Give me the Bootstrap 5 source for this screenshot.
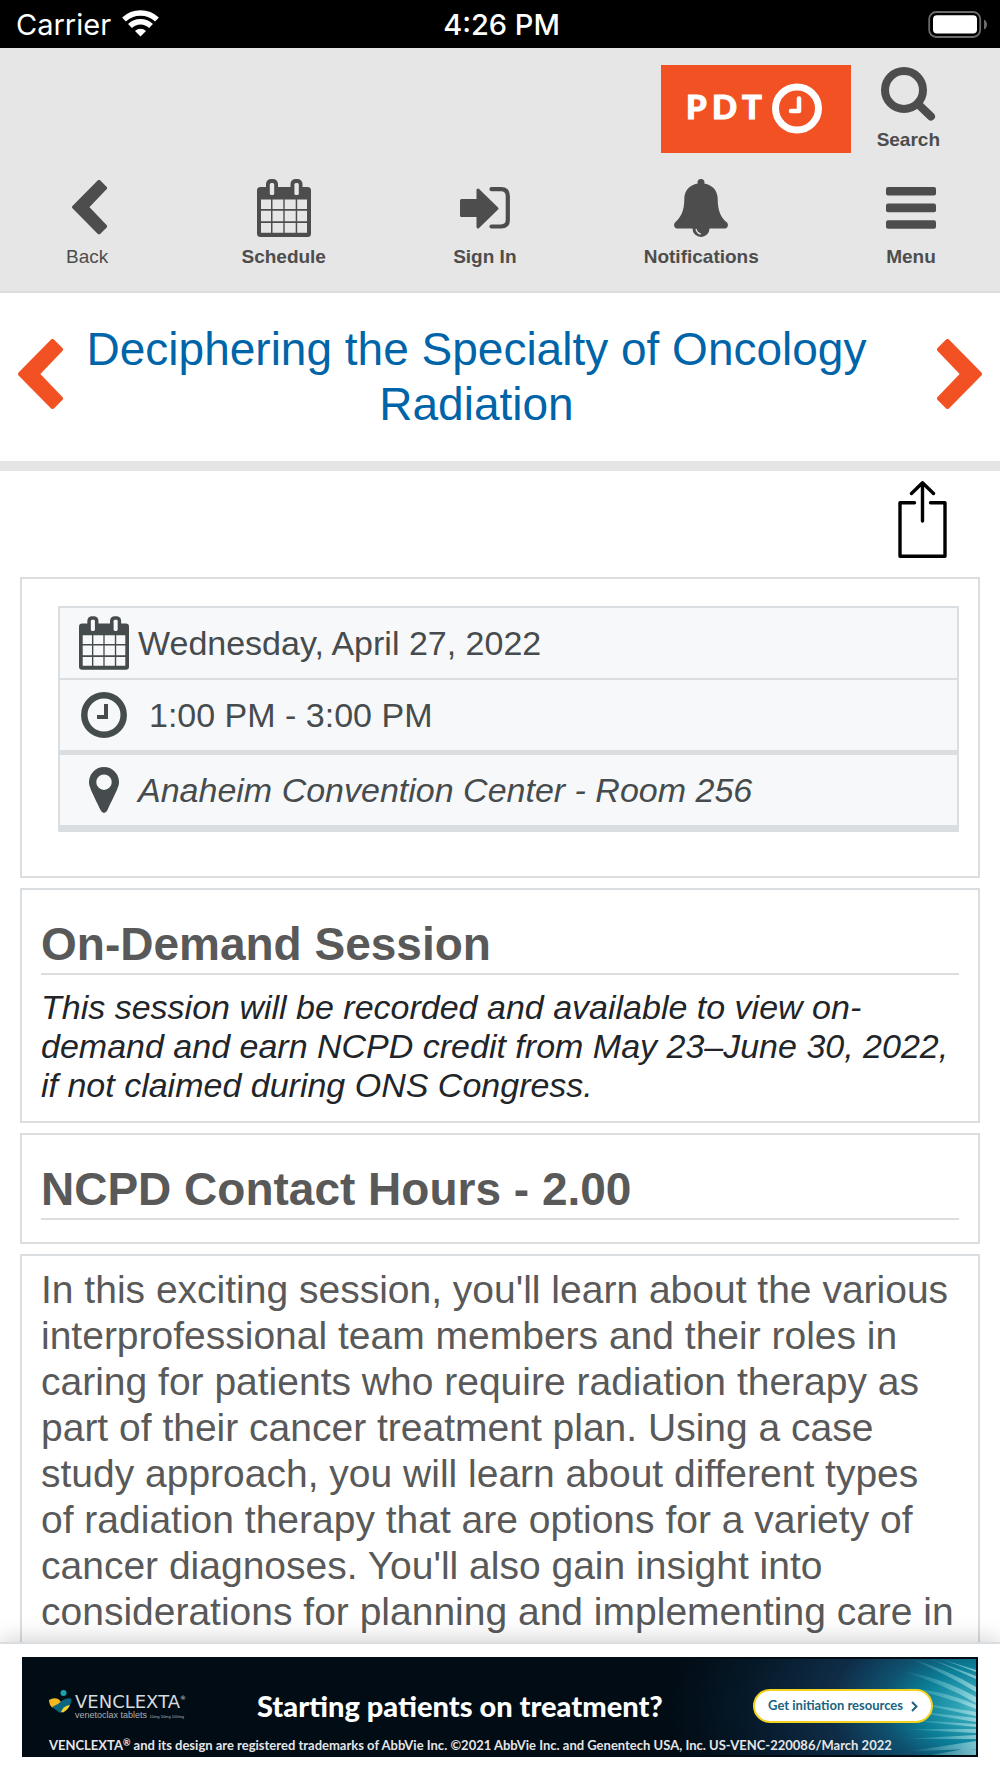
<!DOCTYPE html>
<html lang="en">
<head>
<meta charset="utf-8">
<meta name="viewport" content="width=device-width, initial-scale=1">
<title>Deciphering the Specialty of Oncology Radiation</title>
<link rel="stylesheet" href="https://cdn.jsdelivr.net/npm/bootstrap@5.3.0/dist/css/bootstrap.min.css">
<style>
  :root { --line: #dadee1; --chrome: #e6e6e6; --ink: #4d4d4d; --slate: #464b4d; --brand: #f15123; --title: #0064a8; }
  body { font-family: "Liberation Sans", Arial, sans-serif; color: #595959; background: #fff; }
  svg { display: block; flex: none; }
  .status { flex: none; height: 48px; padding: 0 13px 0 16px; background: #000; color: #fff; font: 29px/50px Inter, sans-serif; }
  .status > * { flex: 1 1 0; }
  .status .wifi { margin: 0 0 4px 11px; }
  .status .clock { font-weight: 500; }
  .topbar { flex: none; background: var(--chrome); border-bottom: 2px solid var(--line); --paper: var(--chrome); padding: 17px 0 22px; }
  .topbar a { color: var(--ink); text-decoration: none; font-weight: 700; font-size: 19px; line-height: 24px; }
  .brandrow { padding-right: 60px; gap: 26px; }
  .brandrow .find { gap: 6px; padding-top: 1px; }
  .tabrow { padding: 26px 64px 0 66px; }
  .tabrow a { gap: 8px; }
  .tabrow a.plain { font-weight: 400; padding-right: 6px; }
  .tabrow a.plain svg { margin-left: 6px; }
  .talk { padding: 29px 18px; border-bottom: 10px solid #e5e5e5; }
  .talk h1 { color: var(--title); font-size: 46px; line-height: 55px; font-weight: 400; padding-right: 47px; }
  .talk a { color: var(--brand); padding-bottom: 6px; }
  .share { padding: 10px 53px 19px 0; }
  .share button { border: 0; background: none; padding: 0; color: #000; }
  .stack { padding: 0 20px; gap: 10px; }
  .panel { border: 2px solid var(--line); padding: 0 19px; }
  .panel h2 { font-size: 46px; line-height: 55px; font-weight: 700; padding: 27px 0 1px; border-bottom: 2px solid var(--line); }
  .facts { --paper: #f7f8fa; border: 2px solid var(--line); border-bottom-width: 7px; background: var(--paper); color: var(--slate); font-size: 34px; line-height: 40px; margin: 27px 0 44px 17px; }
  .facts li { height: 72px; padding-left: 19px; gap: 9px; border-bottom: 2px solid var(--line); }
  .facts li:nth-child(2) { border-bottom-width: 5px; height: 75px; gap: 20px; }
  .facts li:last-child { border-bottom: 0; height: 70px; }
  .facts .glyph { width: 50px; }
  .note { font-size: 34px; line-height: 39px; color: #212529; margin: 13px 0 16px; }
  .hours { padding-bottom: 22px; }
  .about { font-size: 39px; line-height: 46px; margin: 11px 0 60px; }
  .adbar { flex: none; border-top: 2px solid var(--line); background: #fff; padding: 13px 22px 21px; box-shadow: 0 0 24px rgba(0,0,0,.22); z-index: 1; }
  .ad { background: #020c15; color: #fff; height: 100px; padding: 32px 45px 3px 27px; font-family: Lato, sans-serif; }
  .ad .rays { right: 2px; top: 2px; }
  .ad .vlogo { gap: 2px; width: 208px; }
  .ad .vname { font: 18px/16px "DejaVu Sans", sans-serif; color: #d5dadd; }
  .ad .vname sup { font-size: 6px; top: -8px; }
  .ad .vsub { font: 9px/10px "Liberation Sans", sans-serif; color: #aab1b5; }
  .ad .vsub small { font-size: 4px; }
  .ad .lead-line { font-size: 29px; line-height: 34px; font-weight: 900; }
  .ad .pill { height: 34px; width: 180px; border: 2px solid #f3d21c; border-radius: 17px; background: #fff; color: #1b6380; font-size: 13px; font-weight: 700; text-decoration: none; gap: 8px; }
  .ad .legal { font-size: 13px; line-height: 18px; font-weight: 700; color: #e3e6e8; white-space: nowrap; }
  .ad .legal sup { font-size: 9px; }
</style>
</head>
<body>
<svg width="0" height="0" class="position-absolute" aria-hidden="true">
  <symbol id="cal" viewBox="0 0 54 58">
    <rect y="8" width="54" height="50" rx="3.500" fill="currentColor"/>
    <rect x="9" width="12" height="20" rx="5" fill="currentColor"/>
    <rect x="33.500" width="12" height="20" rx="5" fill="currentColor"/>
    <g fill="var(--paper)">
      <rect x="12.800" y="4" width="4.400" height="12" rx="1.500"/><rect x="37.400" y="4" width="4.400" height="12" rx="1.500"/>
      <path d="M4 20.500h10v9.500h-10zM15.500 20.500h10.800v9.500h-10.800zM27.700 20.500h11v9.500h-11zM40.200 20.500h9.800v9.500h-9.800zM4 31.800h10v10.400h-10zM15.500 31.800h10.800v10.400h-10.800zM27.700 31.800h11v10.400h-11zM40.200 31.800h9.800v10.400h-9.800zM4 44h10v9.700h-10zM15.500 44h10.800v9.700h-10.800zM27.700 44h11v9.700h-11zM40.200 44h9.800v9.700h-9.800z"/>
    </g>
  </symbol>
  <symbol id="chev" viewBox="0 0 45 70">
    <path d="M2 35L34.500 2L43 10.500L19.500 35L43 59.500L34.500 68Z" fill="currentColor" stroke="currentColor" stroke-width="4" stroke-linejoin="round"/>
  </symbol>
</svg>

<div class="vh-100 d-flex flex-column overflow-hidden">
  <div class="status d-flex align-items-start">
    <div class="d-flex align-items-center"><span>Carrier</span>
      <svg width="37" height="28" viewBox="0 0 37 28" fill="none" stroke="#fff" stroke-width="5.500" class="wifi" aria-hidden="true"><path d="M2 10.500a24 24 0 0 1 33 0"/><path d="M8 17a15 15 0 0 1 21 0"/><path d="M18.500 27.500l-5.500-5.500a8 8 0 0 1 11 0z" fill="#fff" stroke="none"/></svg>
    </div>
    <div class="clock text-center">4:26 PM</div>
    <div class="d-flex justify-content-end pt-2">
      <svg width="60" height="32" viewBox="0 0 60 32" aria-hidden="true"><rect x="2.200" y="4" width="51" height="25" rx="7" fill="none" stroke="#6c6c6c" stroke-width="1.800"/><rect x="6" y="7.300" width="44" height="18.200" rx="4" fill="#fff"/><path d="M57 11.500q3 1.500 3 5t-3 5z" fill="#6c6c6c"/></svg>
    </div>
  </div>

  <header class="topbar">
    <div class="brandrow d-flex justify-content-end align-items-start">
      <svg width="190" height="88" viewBox="0 0 190 88" role="img" aria-label="PDT">
        <rect width="190" height="88" fill="#f15123"/>
        <text x="25 51 81" y="54" fill="#fff" stroke="#fff" stroke-width="1" font-family="Lato, sans-serif" font-weight="900" font-size="33">PDT</text>
        <circle cx="136" cy="43.500" r="21.500" fill="none" stroke="#fff" stroke-width="7"/>
        <path d="M138 33.500V46H130" fill="none" stroke="#fff" stroke-width="4.500" stroke-linecap="round" stroke-linejoin="round"/>
      </svg>
      <a href="#" class="find d-flex flex-column align-items-center">
        <svg width="56" height="56" viewBox="0 0 56 56" fill="none" stroke="currentColor" stroke-width="8" stroke-linecap="round" aria-hidden="true"><circle cx="24" cy="24" r="19"/><path d="M38.500 38.500L51 50.500"/></svg>
        <span>Search</span>
      </a>
    </div>
    <nav class="tabrow d-flex justify-content-between">
      <a href="#" class="plain d-flex flex-column align-items-center"><svg width="36" height="58" viewBox="0 -1 46 72" preserveAspectRatio="xMidYMin meet" aria-hidden="true"><use href="#chev" width="45" height="70"/></svg><span>Back</span></a>
      <a href="#" class="d-flex flex-column align-items-center"><svg width="54" height="58" aria-hidden="true"><use href="#cal"/></svg><span>Schedule</span></a>
      <a href="#" class="d-flex flex-column align-items-center"><svg width="50" height="58" viewBox="0 0 50 58" aria-hidden="true"><path d="M1.500 21.500H18V11L37 29.500L18 48V36.500H1.500Z" fill="currentColor" stroke="currentColor" stroke-width="3" stroke-linejoin="round"/><path d="M31.500 10.200H41q6.800 0 6.800 6.800V41q0 6.500-6.800 6.500H31.500" fill="none" stroke="currentColor" stroke-width="4.200" stroke-linecap="round"/></svg><span>Sign In</span></a>
      <a href="#" class="d-flex flex-column align-items-center"><svg width="54" height="58" viewBox="0 0 54 58" aria-hidden="true"><path d="M27 0a3.200 3.200 0 0 1 3.200 4.500C39 6 43.700 12 43.700 20C43.700 32 47 39 53 43.500C55 46 53.500 49.500 51 49.500H35.500a8.500 8.500 0 0 1-17 0H3C0.500 49.500-1 46 1 43.500C7 38 10.300 32 10.300 20C10.300 12 15 6 23.800 4.500A3.200 3.200 0 0 1 27 0Z" fill="currentColor"/><path d="M22 50q1 4.500 5 5" fill="none" stroke="var(--paper)" stroke-width="1.200"/></svg><span>Notifications</span></a>
      <a href="#" class="d-flex flex-column align-items-center"><svg width="50" height="58" viewBox="0 0 50 58" fill="currentColor" aria-hidden="true"><rect y="8" width="50" height="8.600" rx="2"/><rect y="24.600" width="50" height="8.600" rx="2"/><rect y="41.200" width="50" height="8.600" rx="2"/></svg><span>Menu</span></a>
    </nav>
  </header>

  <main class="flex-grow-1 overflow-hidden">
    <div class="talk d-flex align-items-center">
      <a href="#" aria-label="Previous session"><svg width="45" height="70"><use href="#chev"/></svg></a>
      <h1 class="flex-grow-1 text-center mb-0">Deciphering the Specialty of Oncology Radiation</h1>
      <a href="#" aria-label="Next session"><svg width="45" height="70" viewBox="0 0 45 70"><path d="M43 35L10.500 2L2 10.500L25.500 35L2 59.500L10.500 68Z" fill="currentColor" stroke="currentColor" stroke-width="4" stroke-linejoin="round"/></svg></a>
    </div>
    <div class="share d-flex justify-content-end">
      <button type="button" aria-label="Share"><svg width="49" height="77" viewBox="0 0 49 77" fill="none" stroke="#000" stroke-width="3.400" stroke-linecap="round" stroke-linejoin="round"><path d="M16.500 21.800H2V75.300H47V21.800H32.500M24.500 40V2.500M13.500 12.500L24.500 1.800L35.500 12.500"/></svg></button>
    </div>

    <div class="stack d-flex flex-column">
      <section class="panel">
        <ul class="facts list-unstyled">
          <li class="d-flex align-items-center"><span class="glyph"><svg width="50" height="54" aria-hidden="true"><use href="#cal"/></svg></span>Wednesday, April 27, 2022</li>
          <li class="d-flex align-items-center"><span class="glyph"><svg width="50" height="46" viewBox="-2 0 50 46" fill="none" stroke="currentColor" aria-hidden="true"><circle cx="23" cy="23" r="19.700" stroke-width="6.500"/><path d="M25 12V25H16" stroke-width="4"/></svg></span>1:00 PM - 3:00 PM</li>
          <li class="d-flex align-items-center"><span class="glyph"><svg width="50" height="46" viewBox="-10 0 50 46" aria-hidden="true"><path fill-rule="evenodd" fill="currentColor" d="M15 0A15 15 0 0 1 30 15C30 20 27 25 18.500 43Q17 46 15 46T11.500 43C3 25 0 20 0 15A15 15 0 0 1 15 0ZM15 7.500a7.700 7.700 0 1 0 .01 0Z"/></svg></span><em>Anaheim Convention Center - Room 256</em></li>
        </ul>
      </section>
      <section class="panel">
        <h2 class="mb-0">On-Demand Session</h2>
        <p class="note fst-italic">This session will be recorded and available to view on-demand and earn NCPD credit from May 23–June 30, 2022, if not claimed during ONS Congress.</p>
      </section>
      <section class="panel hours">
        <h2 class="mb-0">NCPD Contact Hours - 2.00</h2>
      </section>
      <section class="panel">
        <p class="about">In this exciting session, you'll learn about the various interprofessional team members and their roles in caring for patients who require radiation therapy as part of their cancer treatment plan. Using a case study approach, you will learn about different types of radiation therapy that are options for a variety of cancer diagnoses. You'll also gain insight into considerations for planning and implementing care in</p>
      </section>
    </div>
  </main>

  <footer class="adbar position-relative">
    <div class="ad position-relative overflow-hidden d-flex flex-column justify-content-between">
      <svg class="rays position-absolute" width="330" height="96" viewBox="0 0 330 96" aria-hidden="true">
        <defs>
          <radialGradient id="glow" gradientUnits="userSpaceOnUse" cx="345" cy="50" r="320" gradientTransform="translate(0 18) scale(1 .6)">
            <stop offset="0" stop-color="#7ccfda"/><stop offset=".1" stop-color="#2fa3b5"/><stop offset=".22" stop-color="#0b7f98"/><stop offset=".34" stop-color="#0e5270"/><stop offset=".5" stop-color="#0f2c47"/><stop offset=".78" stop-color="#051827"/><stop offset="1" stop-color="#020c15"/>
          </radialGradient>
          <linearGradient id="fade" gradientUnits="userSpaceOnUse" x1="255" y1="0" x2="330" y2="0"><stop offset="0" stop-color="#8fdce6" stop-opacity="0"/><stop offset="1" stop-color="#d5f6f8" stop-opacity=".55"/></linearGradient>
        </defs>
        <rect width="330" height="96" fill="url(#glow)"/>
        <g fill="url(#fade)">
          <path d="M285 0L330 17V20ZM295 0L330 11V13ZM265 0Q300 10 330 28V33Q298 14 265 0ZM255 12Q295 18 330 38V44Q295 24 255 12ZM250 28Q295 30 330 46V50Q295 35 250 28ZM250 40L330 53V57ZM250 50L330 59V63ZM250 60L330 65V68ZM252 70L330 70V74ZM255 80L330 76V80ZM265 92L330 82V90ZM285 96L330 88V96Z"/>
        </g>
      </svg>
      <div class="d-flex align-items-center position-relative">
        <div class="vlogo d-flex align-items-start">
          <svg width="24" height="24" viewBox="0 0 24 24" aria-hidden="true"><circle cx="14.500" cy="3" r="3" fill="#16a5a8"/><path d="M0 10Q5 7 10 9.500L12 12Q6 18 4 18Q0 15 0 10Z" fill="#f6b91c"/><path d="M3 17Q10 14 14 10Q20 7 22.500 9Q23 14 17 20L11 23Z" fill="#0a6680"/><path d="M12 22Q14 16 21 15Q19 20 14 22.500Z" fill="#f8d32b"/></svg>
          <div class="pt-1"><div class="vname">VENCLEXTA<sup>®</sup></div><div class="vsub">venetoclax tablets <small>10mg 50mg 100mg</small></div></div>
        </div>
        <div class="lead-line">Starting patients on treatment?</div>
        <a href="#" class="pill ms-auto d-flex align-items-center justify-content-center">Get initiation resources
          <svg width="7" height="11" viewBox="0 0 7 11" fill="none" stroke="currentColor" stroke-width="2" aria-hidden="true"><path d="M1 1L5.500 5.500L1 10"/></svg></a>
      </div>
      <div class="legal position-relative">VENCLEXTA<sup>®</sup> and its design are registered trademarks of AbbVie Inc. ©2021 AbbVie Inc. and Genentech USA, Inc. US-VENC-220086/March 2022</div>
    </div>
  </footer>
</div>
<script src="https://cdn.jsdelivr.net/npm/bootstrap@5.3.0/dist/js/bootstrap.bundle.min.js"></script>
</body>
</html>
